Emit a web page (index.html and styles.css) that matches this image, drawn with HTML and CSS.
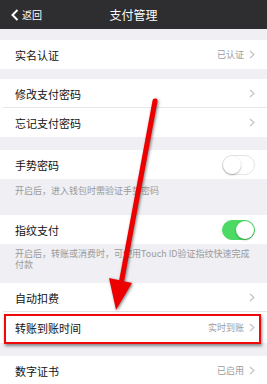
FILE: index.html
```html
<!DOCTYPE html>
<html lang="zh-CN">
<head>
<meta charset="utf-8">
<link rel="stylesheet" href="styles.css">
</head>
<body>
<div class="page">
  <header class="nav">
    <span class="back">
      <svg class="back-icon" width="8" height="12" viewBox="0 0 8 12"><path d="M6.5 1 L1.5 6 L6.5 11" fill="none" stroke="#fff" stroke-width="2"/></svg>
      返回
    </span>
    <h1 class="title">支付管理</h1>
  </header>

  <div class="gap gap-11"></div>
  <div class="group">
    <div class="row"><span class="label">实名认证</span><span class="value">已认证</span><svg class="chev" width="6" height="9" viewBox="0 0 6 9"><path d="M1 1 L5 4.5 L1 8" fill="none" stroke="#c2c2c7" stroke-width="1.1"/></svg></div>
  </div>

  <div class="gap gap-10"></div>
  <div class="group">
    <div class="row sep"><span class="label">修改支付密码</span><svg class="chev" width="6" height="9" viewBox="0 0 6 9"><path d="M1 1 L5 4.5 L1 8" fill="none" stroke="#c2c2c7" stroke-width="1.1"/></svg></div>
    <div class="row"><span class="label">忘记支付密码</span><svg class="chev" width="6" height="9" viewBox="0 0 6 9"><path d="M1 1 L5 4.5 L1 8" fill="none" stroke="#c2c2c7" stroke-width="1.1"/></svg></div>
  </div>

  <div class="gap gap-13"></div>
  <div class="group">
    <div class="row"><span class="label">手势密码</span><span class="toggle"><span class="knob"></span></span></div>
  </div>
  <p class="caption cap-1">开启后，进入钱包时需验证手势密码</p>

  <div class="group">
    <div class="row"><span class="label">指纹支付</span><span class="toggle on"><span class="knob"></span></span></div>
  </div>
  <p class="caption cap-2">开启后，转账或消费时，可使用Touch ID验证指纹快速完成付款</p>

  <div class="group">
    <div class="row sep"><span class="label">自动扣费</span><svg class="chev" width="6" height="9" viewBox="0 0 6 9"><path d="M1 1 L5 4.5 L1 8" fill="none" stroke="#c2c2c7" stroke-width="1.1"/></svg></div>
    <div class="row row-tall"><span class="label">转账到账时间</span><span class="value">实时到账</span><svg class="chev" width="6" height="9" viewBox="0 0 6 9"><path d="M1 1 L5 4.5 L1 8" fill="none" stroke="#c2c2c7" stroke-width="1.1"/></svg></div>
  </div>

  <div class="gap gap-12"></div>
  <div class="group">
    <div class="row"><span class="label">数字证书</span><span class="value">已启用</span><svg class="chev" width="6" height="9" viewBox="0 0 6 9"><path d="M1 1 L5 4.5 L1 8" fill="none" stroke="#c2c2c7" stroke-width="1.1"/></svg></div>
  </div>

  <div class="highlight"></div>
  <svg class="arrow" width="267" height="384" viewBox="0 0 267 384">
    <line x1="155" y1="101" x2="121" y2="284" stroke="#ec0000" stroke-width="5" stroke-linecap="round"/>
    <polygon points="109,278 132,283 116,310" fill="#ec0000"/>
  </svg>
</div>
</body>
</html>
```

FILE: styles.css
```css
* { box-sizing: border-box; }
html, body { margin: 0; padding: 0; }
body {
  background: #efeff4;
  font-family: "Noto Sans CJK SC", "Noto Sans", sans-serif;
  color: #111;
}
.page {
  position: relative;
  width: 267px;
  height: 384px;
  overflow: hidden;
  background: #efeff4;
}
.nav {
  height: 29px;
  background: #2e2e31;
  display: flex;
  align-items: center;
  justify-content: center;
  position: relative;
}
.back {
  position: absolute;
  left: 11px;
  top: 0;
  height: 29px;
  display: flex;
  align-items: center;
  gap: 3px;
  color: #fff;
  font-size: 10px;
}
.title {
  margin: 0;
  font-size: 12px;
  font-weight: 400;
  color: #fff;
}
.gap-10 { height: 10px; }
.gap-11 { height: 11px; }
.gap-12 { height: 13px; }
.gap-13 { height: 13px; }
.group { background: #fff; }
.row {
  height: 29px;
  display: flex;
  align-items: center;
  padding: 0 12px 0 15px;
  position: relative;
}
.row-tall { height: 31px; }
.row.sep::after {
  content: "";
  position: absolute;
  left: 3px;
  right: 0;
  bottom: 0;
  height: 1px;
  background: #e6e6ea;
}
.label {
  flex: 1;
  font-size: 11px;
  color: #111;
}
.value {
  font-size: 9px;
  color: #9c9c9c;
  margin-right: 5px;
}
.chev { display: block; }
.toggle {
  width: 33px;
  height: 20px;
  border-radius: 10px;
  border: 1px solid #e3e3e6;
  background: #fff;
  position: relative;
}
.toggle .knob {
  position: absolute;
  left: 0;
  top: 0;
  width: 18px;
  height: 18px;
  border-radius: 50%;
  background: #fff;
  box-shadow: 0 1px 2px rgba(0,0,0,0.3);
}
.toggle.on {
  background: #4cd964;
  border-color: #4cd964;
}
.toggle.on .knob {
  left: 13px;
}
.caption {
  margin: 0;
  padding: 0 12px 0 15px;
  font-size: 9px;
  line-height: 11px;
  color: #9a9a9a;
}
.cap-1 { height: 36px; padding-top: 6px; }
.cap-2 { height: 39px; padding-top: 4px; }
.highlight {
  position: absolute;
  left: 4px;
  top: 314px;
  width: 257px;
  height: 30px;
  border: 2px solid #ee0a0a;
  box-shadow: 1px 2px 3px rgba(0,0,0,0.45);
}
.arrow {
  position: absolute;
  left: 0;
  top: 0;
  filter: drop-shadow(1px 1px 1.5px rgba(0,0,0,0.5));
}
```
